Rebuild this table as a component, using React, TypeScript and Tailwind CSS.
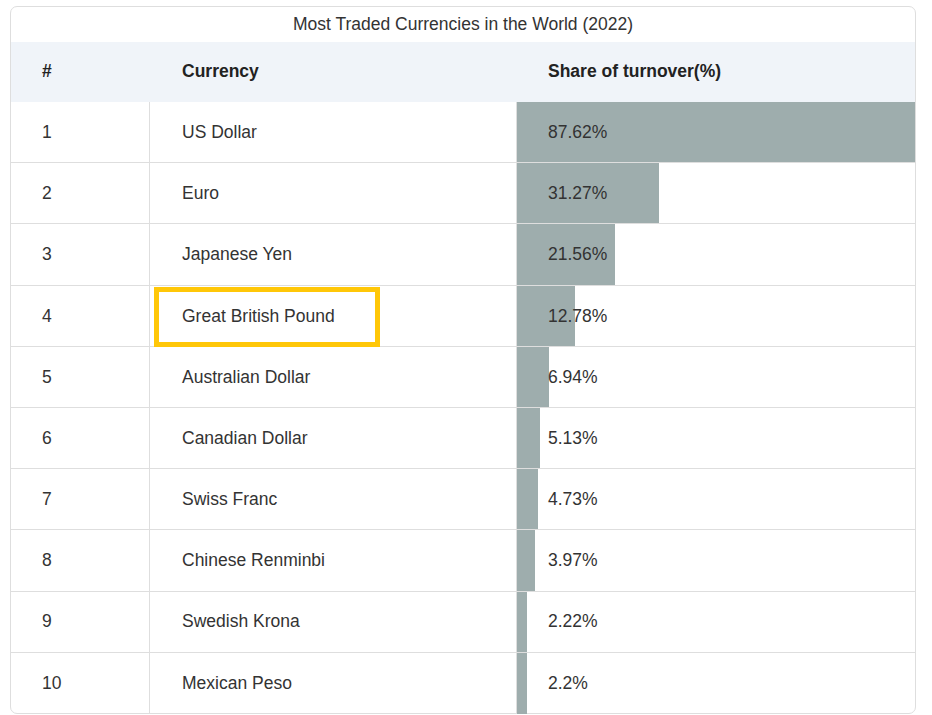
import React from "react";

const rows = [
  ["1", "US Dollar", 87.62, "87.62%"],
  ["2", "Euro", 31.27, "31.27%"],
  ["3", "Japanese Yen", 21.56, "21.56%"],
  ["4", "Great British Pound", 12.78, "12.78%"],
  ["5", "Australian Dollar", 6.94, "6.94%"],
  ["6", "Canadian Dollar", 5.13, "5.13%"],
  ["7", "Swiss Franc", 4.73, "4.73%"],
  ["8", "Chinese Renminbi", 3.97, "3.97%"],
  ["9", "Swedish Krona", 2.22, "2.22%"],
  ["10", "Mexican Peso", 2.2, "2.2%"],
] as const;

export default function App() {
  return (
    <div
      className="bg-white w-[932px] h-[715px] pl-[10px] pt-[6px]"
      style={{ fontFamily: '"Liberation Sans", Arial, sans-serif' }}
    >
      <div className="w-[906px] h-[708px] border border-[#dedede] rounded-[7px] text-[#333] text-[17.5px]">
        <div className="h-[35px] flex items-center justify-center text-[#333]">
          Most Traded Currencies in the World (2022)
        </div>
        <div className="h-[60px] bg-[#f0f4f9] flex items-center font-bold text-[#222] pb-[2px]">
          <div className="w-[139px] pl-[31px]">#</div>
          <div className="w-[367px] pl-[32px]">Currency</div>
          <div className="flex-1 pl-[31px]">Share of turnover(%)</div>
        </div>
        {rows.map(([n, name, v, label], i) => (
          <div
            key={n}
            className={
              "flex h-[61.2px] " + (i < rows.length - 1 ? "border-b border-[#dedede]" : "")
            }
          >
            <div className="w-[139px] border-r border-[#dedede] pl-[31px] flex items-center">
              {n}
            </div>
            <div className="relative w-[367px] border-r border-[#dedede] pl-[32px] flex items-center">
              {name}
              {i === 3 && (
                <div className="absolute left-[4px] top-[1px] w-[226px] h-[60px] border-[5px] border-[#ffc708]" />
              )}
            </div>
            <div className="relative flex-1 flex items-center">
              <div
                className="absolute left-0 top-0 bottom-0 bg-[#9eadad]"
                style={{ width: `${(v / 87.62) * 100}%` }}
              />
              <span className="relative pl-[31px]">{label}</span>
            </div>
          </div>
        ))}
      </div>
    </div>
  );
}
